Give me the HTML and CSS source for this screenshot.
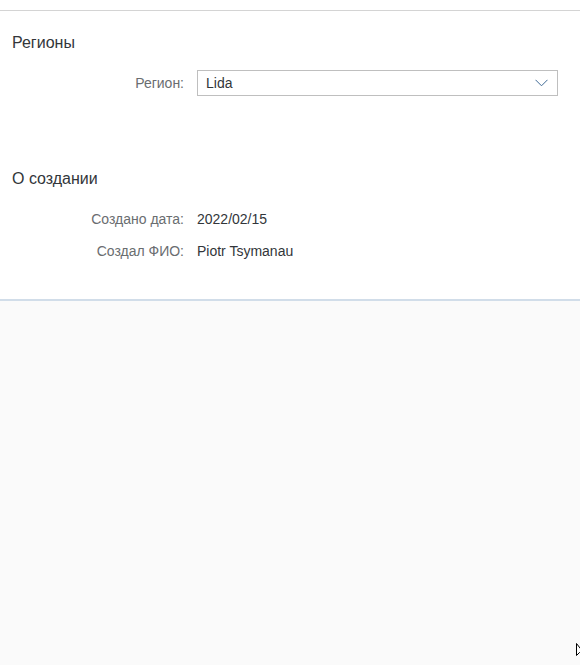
FILE: index.html
```html
<!DOCTYPE html>
<html lang="ru">
<head>
<meta charset="utf-8">
<link rel="stylesheet" href="styles.css">
</head>
<body>
<div class="page">
  <div class="topbar"></div>
  <div class="content">
    <section class="section">
      <h2 class="section-title">Регионы</h2>
      <div class="form-row row-input">
        <label class="label">Регион:</label>
        <div class="select">
          <span class="select-value">Lida</span>
          <svg class="chevron" width="13" height="8" viewBox="0 0 13 8"><path d="M0.5 0.8 L6.5 6.8 L12.5 0.8" fill="none" stroke="#3f6a95" stroke-width="1"/></svg>
        </div>
      </div>
    </section>
    <section class="section section-2">
      <h2 class="section-title">О создании</h2>
      <div class="rows">
        <div class="form-row row-text">
          <span class="label">Создано дата:</span>
          <span class="value">2022/02/15</span>
        </div>
        <div class="form-row row-text">
          <span class="label">Создал ФИО:</span>
          <span class="value">Piotr Tsymanau</span>
        </div>
      </div>
    </section>
  </div>
  <div class="footer-area"></div>
  <svg class="cursor" width="8" height="14" viewBox="0 0 8 14"><path d="M0.5 0.5 L0.5 12.5 L3.5 9.5 L7.5 9.5 Z" fill="#fff" stroke="#000" stroke-width="1"/></svg>
</div>
</body>
</html>
```

FILE: styles.css
```css
html, body {
  margin: 0;
  padding: 0;
  height: 100%;
}
body {
  font-family: "Liberation Sans", Arial, sans-serif;
  background: #fafafa;
  color: #32363a;
}
.page {
  position: relative;
  min-height: 665px;
  display: flex;
  flex-direction: column;
}
.topbar {
  height: 10px;
  background: #fff;
  border-bottom: 1px solid #d4d4d4;
}
.content {
  background: #fff;
  border-bottom: 2px solid #d1dde9;
  padding: 22px 22px 32px 12px;
}
.section-title {
  margin: 0;
  font-size: 16px;
  line-height: 20px;
  font-weight: normal;
  color: #32363a;
}
.section-2 {
  margin-top: 73px;
}
.form-row {
  display: grid;
  grid-template-columns: 172px 1fr;
  column-gap: 13px;
  align-items: center;
  font-size: 14px;
}
.row-input {
  margin-top: 17px;
}
.rows {
  margin-top: 14px;
}
.row-text {
  height: 32px;
}
.label {
  text-align: right;
  color: #6a6d70;
}
.value {
  color: #32363a;
}
.select {
  height: 24px;
  border: 1px solid #bfbfbf;
  background: #fff;
  display: flex;
  align-items: center;
  justify-content: space-between;
  padding: 0 9px 0 8px;
  color: #32363a;
}
.chevron {
  display: block;
}
.footer-area {
  flex: 1;
  background: #fafafa;
}
.cursor {
  position: absolute;
  left: 576px;
  top: 643px;
}
```
